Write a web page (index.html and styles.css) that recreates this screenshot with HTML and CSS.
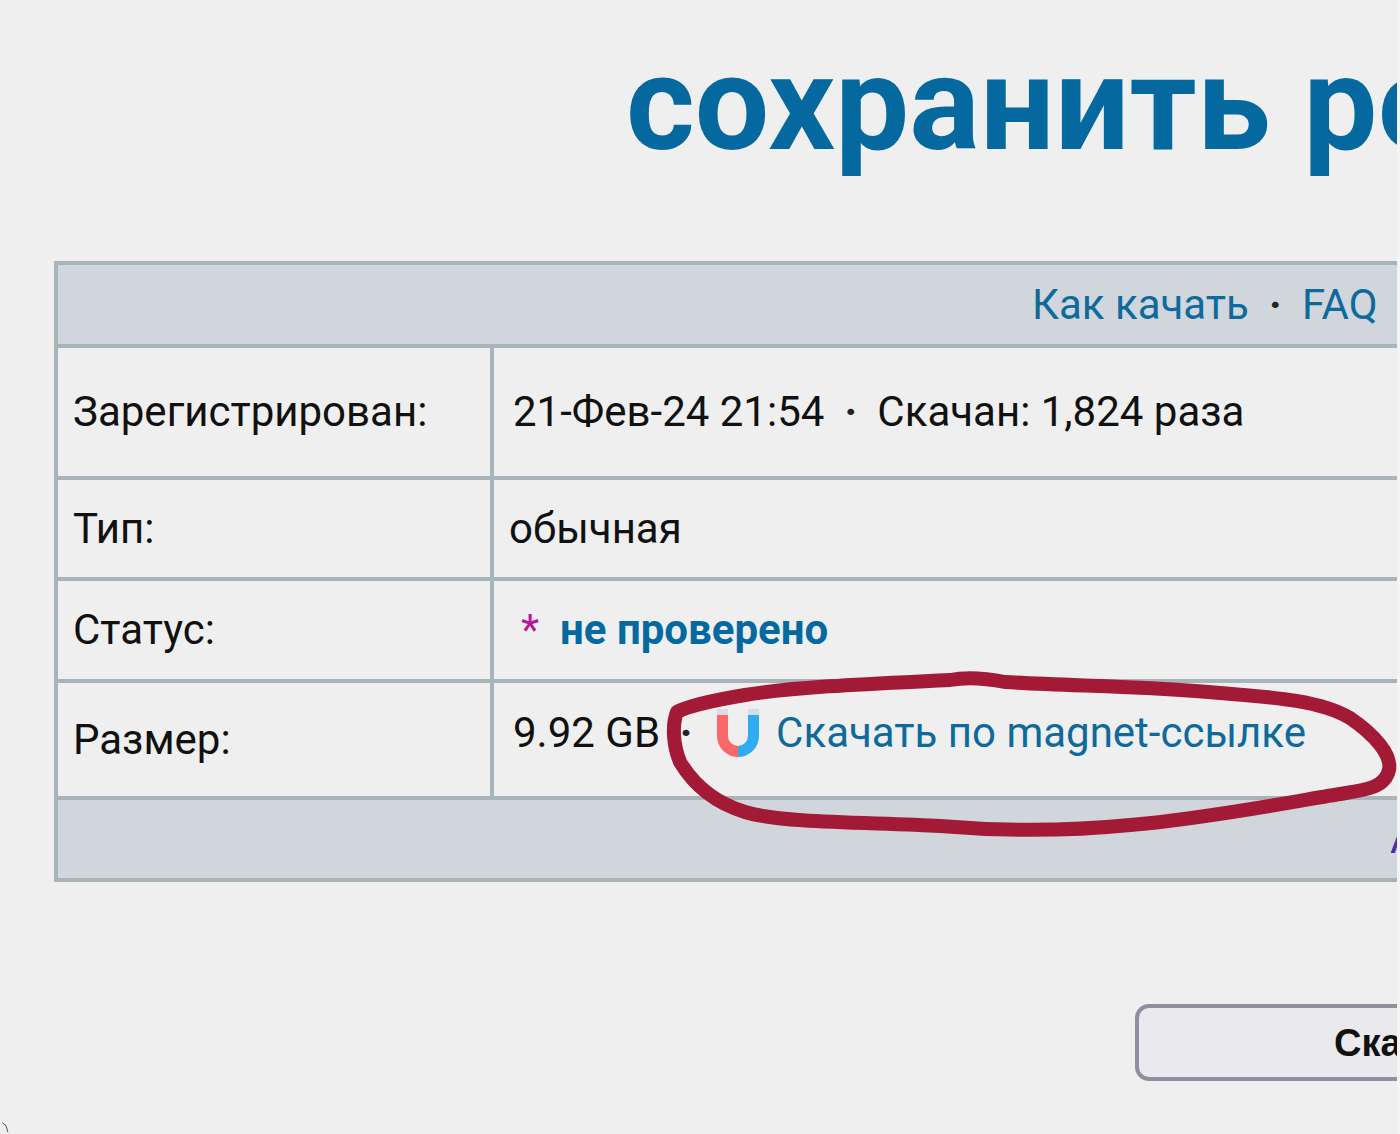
FILE: index.html
```html
<!DOCTYPE html>
<html lang="ru">
<head>
<meta charset="utf-8">
<title>Торрент</title>
<link rel="stylesheet" href="styles.css">
</head>
<body>
<main class="page">
  <h1 class="title">сохранить результат</h1>
  <table class="info">
    <colgroup><col class="col-label"><col></colgroup>
    <tr class="band">
      <td colspan="2" class="band-links"><a href="#">Как качать</a><span class="dot dot-band">·</span><a href="#">FAQ</a><span class="dot dot-band">·</span><a href="#">Правила</a></td>
    </tr>
    <tr class="row-reg">
      <td class="label">Зарегистрирован:</td>
      <td class="value">21-Фев-24 21:54<span class="dot dot-reg">·</span>Скачан: 1,824 раза</td>
    </tr>
    <tr class="row-type">
      <td class="label">Тип:</td>
      <td class="value value-tight">обычная</td>
    </tr>
    <tr class="row-status">
      <td class="label">Статус:</td>
      <td class="value"><span class="star">*</span><b class="status">не проверено</b></td>
    </tr>
    <tr class="row-size">
      <td class="label">Размер:</td>
      <td class="value value-size"><span class="size">9.92 GB</span><span class="dot dot-size">·</span><a class="magnet" href="#"><svg class="magnet-icon" viewBox="0 0 44 48" aria-hidden="true"><path d="M1 6h11v21a10 10 0 0 0 10 10v11A21 21 0 0 1 1 27z" fill="#fb6669"/><path d="M32 6h11v21a21 21 0 0 1-21 21V37a10 10 0 0 0 10-10z" fill="#2fabf2"/><path d="M1 0h11v6H1zM32 0h11v6H32z" fill="#d6dde8"/></svg>Скачать по magnet-ссылке</a></td>
    </tr>
    <tr class="band">
      <td colspan="2" class="band-foot"><a class="foot-link" href="#">Автор</a></td>
    </tr>
  </table>
  <div class="actions"><button class="download" type="button">Скачать</button></div>
</main>
<svg class="scribble" viewBox="0 0 1400 1134" aria-hidden="true"><path d="M950 680C890 683 800 686 745 695C715 700 690 705 677 712C672 725 673 745 680 762C692 782 712 802 745 812C785 824 880 822 940 826C1000 831 1070 831 1130 825C1210 818 1290 802 1340 794C1365 790 1385 788 1389 770C1392 755 1375 735 1350 718C1320 700 1270 697 1220 693C1150 686 1070 686 1005 682C985 678 965 677 950 680z"/></svg>
<svg class="speck" viewBox="0 0 10 14" aria-hidden="true"><path d="M1 2L5 5L7 12"/></svg>
</body>
</html>
```
FILE: styles.css
```css
* {
  box-sizing: border-box;
}

html,
body {
  margin: 0;
  height: 1134px;
  overflow: hidden;
  background: #f4f4f4;
}

.page {
  width: 1397px;
  height: 1134px;
  overflow: hidden;
  background: #efefef;
  font-family: Roboto, "Liberation Sans", sans-serif;
  color: #111;
}

.title {
  margin: 0;
  height: 261px;
  padding: 29px 0 0 626px;
  width: 1800px;
  font-size: 132px;
  line-height: 150px;
  font-weight: 700;
  color: #05699f;
  white-space: nowrap;
}

.info {
  margin-left: 54px;
  width: 1700px;
  table-layout: fixed;
  border-collapse: separate;
  border-spacing: 0;
  border: 4px solid #a9b3ba;
  font-size: 42px;
  line-height: 48px;
}

.col-label {
  width: 436px;
}

.info td {
  padding: 0;
  border-bottom: 4px solid #a9b3ba;
  vertical-align: middle;
}

.info tr:last-child td {
  border-bottom: 0;
}

.band td {
  height: 83px;
  background: #d1d6dd;
}

.info .band:last-child td {
  height: 78px;
}

.info .band-links {
  padding-left: 974px;
}

.info .band-foot {
  padding-left: 1332px;
}

.row-reg td {
  height: 132px;
}

.row-type td {
  height: 101px;
}

.row-status td {
  height: 102px;
}

.row-size td {
  height: 117px;
}

.info .label {
  padding-left: 15px;
  border-right: 4px solid #a9b3ba;
}

.info .value {
  padding-left: 19px;
  white-space: nowrap;
}

.info .value-tight {
  padding-left: 15px;
}

.info .value-size {
  padding-bottom: 14px;
}

a {
  color: #0e6a9c;
  text-decoration: none;
}

.info .foot-link {
  color: #4a2ea6;
}

.dot {
  display: inline-block;
  width: 54px;
  text-align: center;
  color: #222;
  font-weight: 700;
}

.info .dot-band {
  width: 53px;
}

.info .dot-reg {
  width: 53px;
}

.star {
  display: inline-block;
  width: 47px;
  padding-left: 8px;
  color: #b5189a;
}

.status {
  color: #05699f;
  font-weight: 700;
}

.info .dot-size {
  width: 52px;
}

.magnet {
  margin-left: 4px;
}

.magnet-icon {
  width: 44px;
  height: 48px;
  margin-right: 16px;
  vertical-align: -10px;
}

.actions {
  margin: 122px 0 0 1135px;
}

.download {
  width: 550px;
  height: 77px;
  padding: 2px 0 0;
  border: 4px solid #8f8f9f;
  border-radius: 14px;
  background: #e9e9ee;
  color: #111;
  font: 700 38px "Liberation Sans", Arial, sans-serif;
}

.scribble {
  position: absolute;
  left: 0;
  top: 0;
  width: 1400px;
  height: 1134px;
  pointer-events: none;
  clip-path: inset(0 3px 0 0);
}

.scribble path {
  fill: none;
  stroke: #a31a37;
  stroke-width: 14;
  stroke-linejoin: round;
}

.speck {
  position: absolute;
  left: 1px;
  top: 1121px;
  width: 10px;
  height: 13px;
}

.speck path {
  fill: none;
  stroke: #444;
  stroke-width: 1;
}
```
